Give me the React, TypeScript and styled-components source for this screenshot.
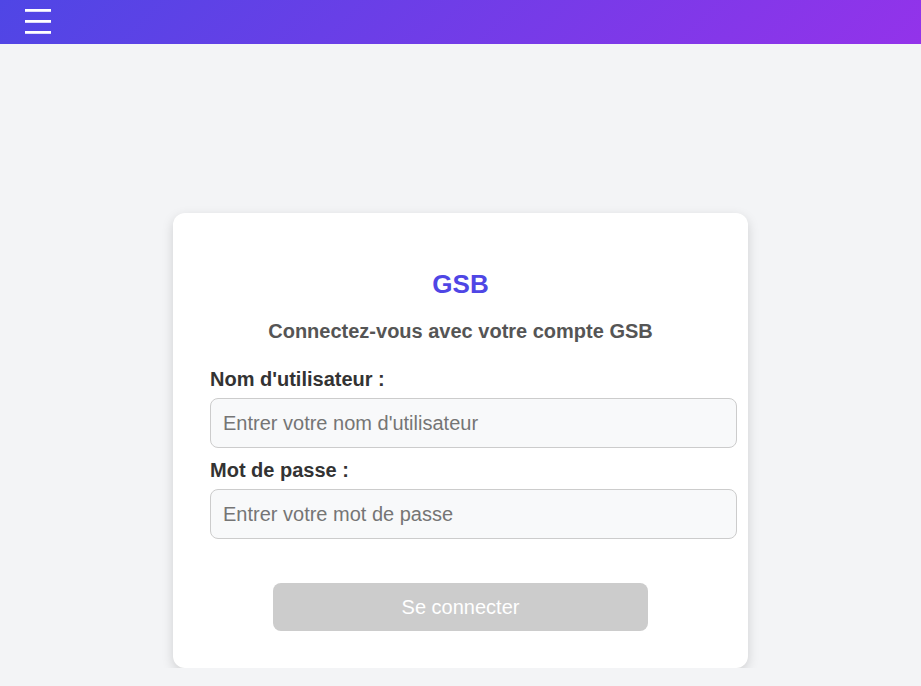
import React from "react";
import styled, { createGlobalStyle } from "styled-components";

const Global = createGlobalStyle`
  html, body { margin: 0; padding: 0; }
  body {
    background: #f3f4f6;
    font-family: "Liberation Sans", Arial, sans-serif;
  }
  * { box-sizing: content-box; }
`;

const Header = styled.header`
  height: 44px;
  background: linear-gradient(135deg, #4f46e5 0%, #9333ea 100%);
  display: flex;
  align-items: center;
  padding-left: 25px;
`;

const MenuButton = styled.button`
  background: none;
  border: none;
  padding: 0;
  display: flex;
  cursor: pointer;
`;

const Main = styled.main`
  display: flex;
  justify-content: center;
  padding-top: 169px;
`;

const Card = styled.div`
  width: 501px;
  padding: 56px 37px 37px;
  background: #ffffff;
  border-radius: 12px;
  box-shadow: 0 4px 12px rgba(0, 0, 0, 0.15);
`;

const Title = styled.h1`
  margin: 0 0 20px;
  text-align: center;
  color: #4f46e5;
  font-size: 26px;
  font-weight: bold;
`;

const Subtitle = styled.p`
  margin: 0 0 25px;
  text-align: center;
  color: #555555;
  font-size: 20px;
  font-weight: bold;
`;

const Form = styled.form`
  display: flex;
  flex-direction: column;
`;

const Label = styled.label`
  display: block;
  color: #333333;
  font-size: 20px;
  font-weight: bold;
  margin-bottom: 7px;
`;

const Input = styled.input<{ $last?: boolean }>`
  width: 100%;
  height: 24px;
  padding: 12px;
  border: 1px solid #cccccc;
  border-radius: 8px;
  background: #f8f9fa;
  font-family: "Liberation Sans", Arial, sans-serif;
  font-size: 20px;
  color: #333;
  margin: 0 0 ${(p) => (p.$last ? "44px" : "11px")};
  outline: none;
  &::placeholder { color: #757575; }
`;

const Submit = styled.button`
  align-self: center;
  width: 375px;
  height: 48px;
  padding: 0;
  border: none;
  border-radius: 8px;
  background: #cccccc;
  color: #ffffff;
  font-family: "Liberation Sans", Arial, sans-serif;
  font-size: 20px;
  cursor: not-allowed;
`;

export default function App() {
  return (
    <>
      <Global />
      <Header>
        <MenuButton aria-label="menu">
          <svg width="26" height="26" viewBox="0 0 26 26">
            <rect x="0" y="0" width="26" height="2.8" fill="#fff" />
            <rect x="0" y="11" width="26" height="2.8" fill="#fff" />
            <rect x="0" y="22" width="26" height="2.8" fill="#fff" />
          </svg>
        </MenuButton>
      </Header>
      <Main>
        <Card>
          <Title>GSB</Title>
          <Subtitle>Connectez-vous avec votre compte GSB</Subtitle>
          <Form onSubmit={(e) => e.preventDefault()}>
            <Label htmlFor="user">Nom d'utilisateur :</Label>
            <Input id="user" placeholder="Entrer votre nom d'utilisateur" />
            <Label htmlFor="pass">Mot de passe :</Label>
            <Input id="pass" type="password" placeholder="Entrer votre mot de passe" $last />
            <Submit type="submit" disabled>Se connecter</Submit>
          </Form>
        </Card>
      </Main>
    </>
  );
}
